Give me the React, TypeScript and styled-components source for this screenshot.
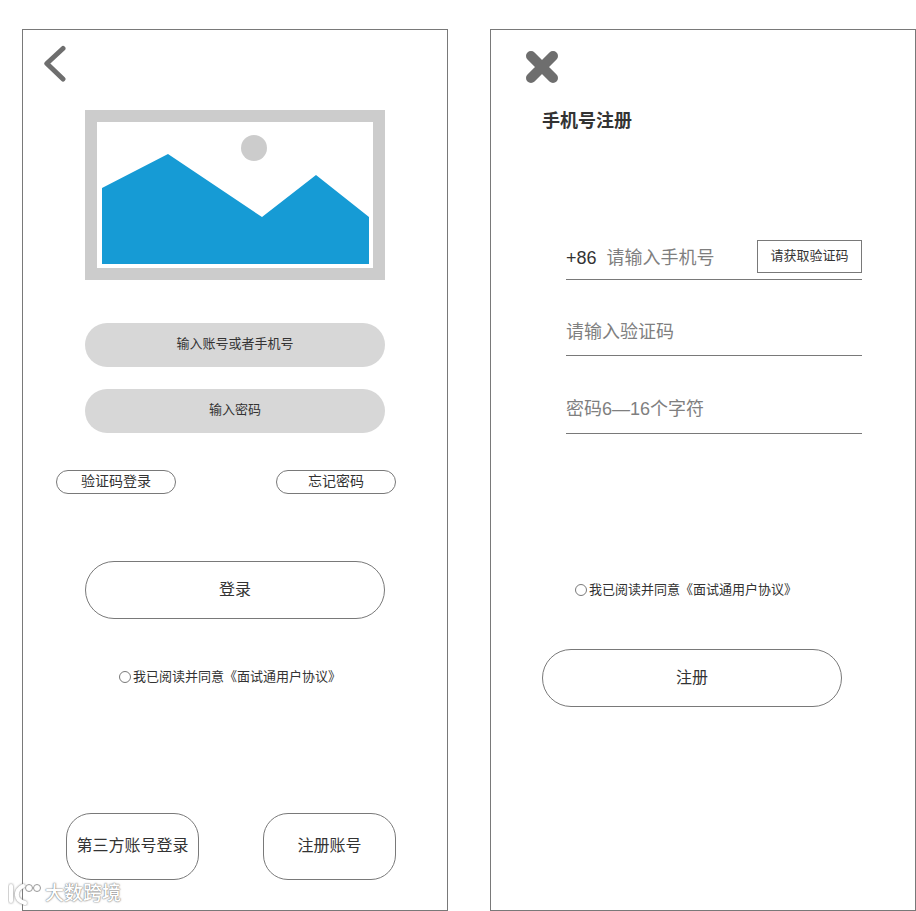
import styled, { createGlobalStyle } from "styled-components";

const GlobalStyle = createGlobalStyle`
  html, body {
    margin: 0;
    padding: 0;
    background: #fff;
  }
  body {
    font-family: "Liberation Sans", "Noto Sans CJK SC", sans-serif;
    color: #333;
  }
`;

const Page = styled.div`
  position: relative;
  display: flex;
  gap: 42px;
  padding: 29px 0 0 22px;
  height: 911px;
  width: 916px;
  box-sizing: border-box;
  overflow: hidden;
`;

const Phone = styled.section`
  width: 426px;
  height: 882px;
  box-sizing: border-box;
  border: 1px solid #797979;
  display: flex;
  flex-direction: column;
`;

const BackIcon = styled.svg`
  display: block;
  margin: 15px 0 0 20px;
  width: 24px;
  height: 38px;
`;

const Picture = styled.svg`
  display: block;
  margin: 27px 0 0 62px;
  width: 300px;
  height: 170px;
`;

const Field = styled.div<{ $top: number }>`
  width: 300px;
  height: 44px;
  margin: ${(p) => p.$top}px 0 0 62px;
  border-radius: 22px;
  background: #d7d7d7;
  display: flex;
  align-items: center;
  justify-content: center;
  font-size: 13px;
  padding-bottom: 6px;
  box-sizing: border-box;
`;

const LinkRow = styled.div`
  display: flex;
  justify-content: space-between;
  margin: 37px 51px 0 33px;
`;

const SmallPill = styled.div`
  width: 120px;
  height: 24px;
  box-sizing: border-box;
  border: 1px solid #797979;
  border-radius: 12px;
  display: flex;
  align-items: center;
  justify-content: center;
  font-size: 14px;
  padding-bottom: 4px;
`;

const WideButton = styled.div<{ $top: number; $left: number }>`
  width: 300px;
  height: 58px;
  box-sizing: border-box;
  margin: ${(p) => p.$top}px 0 0 ${(p) => p.$left}px;
  border: 1px solid #797979;
  border-radius: 29px;
  display: flex;
  align-items: center;
  justify-content: center;
  font-size: 16px;
  padding-bottom: 4px;
`;

const Agreement = styled.div<{ $top: number; $left: number }>`
  display: flex;
  align-items: center;
  gap: 2px;
  margin: ${(p) => p.$top}px 0 0 ${(p) => p.$left}px;
  height: 18px;
  font-size: 13px;
  white-space: nowrap;
`;

const Radio = styled.span`
  width: 12px;
  height: 12px;
  box-sizing: border-box;
  border: 1px solid #797979;
  border-radius: 50%;
  margin-top: 4px;
`;

const BottomRow = styled.div`
  display: flex;
  justify-content: space-between;
  margin: 129px 51px 0 43px;
`;

const BottomButton = styled.div`
  width: 133px;
  height: 67px;
  box-sizing: border-box;
  border: 1px solid #797979;
  border-radius: 25px;
  display: flex;
  align-items: center;
  justify-content: center;
  font-size: 16px;
  padding-bottom: 6px;
  white-space: nowrap;
`;

const CloseIcon = styled.svg`
  display: block;
  margin: 20px 0 0 34px;
  width: 34px;
  height: 34px;
`;

const Title = styled.h1`
  margin: 24px 0 0 51px;
  font-size: 18px;
  line-height: 26px;
  font-weight: 700;
  color: #333;
`;

const Form = styled.div`
  margin: 94px 0 0 75px;
  width: 296px;
  display: flex;
  flex-direction: column;
`;

const FormRow = styled.div<{ $height: number; $pad: number }>`
  height: ${(p) => p.$height}px;
  padding-top: ${(p) => p.$pad}px;
  box-sizing: border-box;
  border-bottom: 1px solid #797979;
  display: flex;
  align-items: center;
  justify-content: space-between;
  font-size: 18px;
  color: #7f7f7f;
`;

const PhoneText = styled.span`
  margin-bottom: 2px;
`;

const Prefix = styled.span`
  color: #333;
  margin-right: 10px;
`;

const CodeButton = styled.div`
  width: 105px;
  height: 33px;
  box-sizing: border-box;
  border: 1px solid #797979;
  display: flex;
  align-items: center;
  justify-content: center;
  font-size: 13px;
  padding-bottom: 4px;
  color: #333;
`;

const Watermark = styled.div`
  position: absolute;
  left: 8px;
  top: 882px;
  display: flex;
  align-items: center;
  gap: 1px;
  color: #fff;
  font-size: 19px;
  font-weight: 500;
  line-height: 24px;
  text-shadow: 0 0 2px #777, 0 0 1px #777;
`;

const WatermarkLogo = styled.svg`
  width: 36px;
  height: 24px;
`;

const WatermarkStroke = styled.path`
  filter: drop-shadow(0 0 1px #777);
`;

export default function App() {
  return (
    <>
      <GlobalStyle />
      <Page>
        <Phone>
          <BackIcon viewBox="0 0 24 38">
            <path
              d="M20 3.5 L3.8 18.5 L20 34"
              fill="none"
              stroke="#6e6e6e"
              strokeWidth="5"
              strokeLinecap="round"
              strokeLinejoin="round"
            />
          </BackIcon>
          <Picture viewBox="0 0 300 170">
            <rect width="300" height="170" fill="#cccccc" />
            <rect x="12" y="12" width="276" height="146" fill="#fff" />
            <circle cx="169" cy="38" r="13" fill="#cccccc" />
            <polygon
              points="17,78 83,44 177,107 231,65 284,107 284,154 17,154"
              fill="#169bd5"
            />
          </Picture>
          <Field $top={43}>输入账号或者手机号</Field>
          <Field $top={22}>输入密码</Field>
          <LinkRow>
            <SmallPill>验证码登录</SmallPill>
            <SmallPill>忘记密码</SmallPill>
          </LinkRow>
          <WideButton $top={67} $left={62}>登录</WideButton>
          <Agreement $top={47} $left={96}>
            <Radio />
            我已阅读并同意《面试通用户协议》
          </Agreement>
          <BottomRow>
            <BottomButton>第三方账号登录</BottomButton>
            <BottomButton>注册账号</BottomButton>
          </BottomRow>
        </Phone>
        <Phone>
          <CloseIcon viewBox="0 0 34 34">
            <path
              d="M6 6 L28 28 M28 6 L6 28"
              stroke="#6e6e6e"
              strokeWidth="10"
              strokeLinecap="round"
            />
          </CloseIcon>
          <Title>手机号注册</Title>
          <Form>
            <FormRow $height={52} $pad={6}>
              <PhoneText>
                <Prefix>+86</Prefix>
                请输入手机号
              </PhoneText>
              <CodeButton>请获取验证码</CodeButton>
            </FormRow>
            <FormRow $height={76} $pad={24}>请输入验证码</FormRow>
            <FormRow $height={78} $pad={24}>密码6—16个字符</FormRow>
          </Form>
          <Agreement $top={145} $left={84}>
            <Radio />
            我已阅读并同意《面试通用户协议》
          </Agreement>
          <WideButton $top={52} $left={51}>注册</WideButton>
        </Phone>
        <Watermark>
          <WatermarkLogo viewBox="0 0 36 24">
            <WatermarkStroke
              d="M3 4 V19 M15 4 C7 8 6 18 17 21"
              fill="none"
              stroke="#fff"
              strokeWidth="4"
              strokeLinecap="round"
            />
            <circle cx="21" cy="6" r="3.5" fill="#fff" stroke="#999" />
            <circle cx="29" cy="6" r="3.5" fill="#fff" stroke="#999" />
          </WatermarkLogo>
          大数跨境
        </Watermark>
      </Page>
    </>
  );
}
